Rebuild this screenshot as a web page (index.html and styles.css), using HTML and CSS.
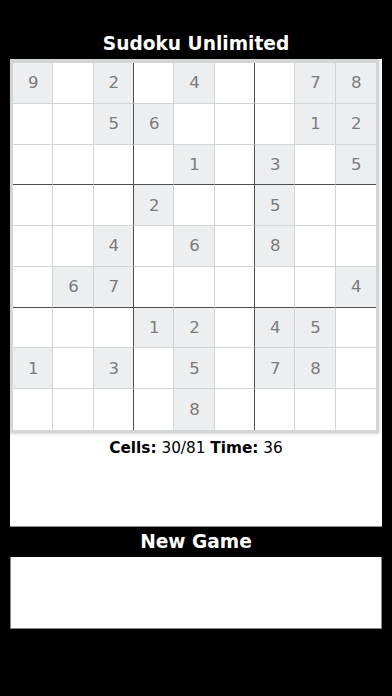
FILE: index.html
```html
<!DOCTYPE html>
<html>
<head>
<meta charset="utf-8">
<link rel="stylesheet" href="styles.css">
</head>
<body>
<div class="app">
  <h1 class="title">Sudoku Unlimited</h1>
  <div class="panel">
    <div class="board">
      <div class="c g">9</div><div class="c"></div><div class="c g br">2</div><div class="c"></div><div class="c g">4</div><div class="c br"></div><div class="c"></div><div class="c g">7</div><div class="c g last">8</div>
      <div class="c"></div><div class="c"></div><div class="c g br">5</div><div class="c g">6</div><div class="c"></div><div class="c br"></div><div class="c"></div><div class="c g">1</div><div class="c g last">2</div>
      <div class="c bb"></div><div class="c bb"></div><div class="c bb br"></div><div class="c bb"></div><div class="c g bb">1</div><div class="c bb br"></div><div class="c g bb">3</div><div class="c bb"></div><div class="c g bb last">5</div>
      <div class="c"></div><div class="c"></div><div class="c br"></div><div class="c g">2</div><div class="c"></div><div class="c br"></div><div class="c g">5</div><div class="c"></div><div class="c last"></div>
      <div class="c"></div><div class="c"></div><div class="c g br">4</div><div class="c"></div><div class="c g">6</div><div class="c br"></div><div class="c g">8</div><div class="c"></div><div class="c last"></div>
      <div class="c bb"></div><div class="c g bb">6</div><div class="c g bb br">7</div><div class="c bb"></div><div class="c bb"></div><div class="c bb br"></div><div class="c bb"></div><div class="c bb"></div><div class="c g bb last">4</div>
      <div class="c"></div><div class="c"></div><div class="c br"></div><div class="c g">1</div><div class="c g">2</div><div class="c br"></div><div class="c g">4</div><div class="c g">5</div><div class="c last"></div>
      <div class="c g">1</div><div class="c"></div><div class="c g br">3</div><div class="c"></div><div class="c g">5</div><div class="c br"></div><div class="c g">7</div><div class="c g">8</div><div class="c last"></div>
      <div class="c bot"></div><div class="c bot"></div><div class="c bot br"></div><div class="c bot"></div><div class="c g bot">8</div><div class="c bot br"></div><div class="c bot"></div><div class="c bot"></div><div class="c bot last"></div>
    </div>
    <p class="status"><b>Cells:</b> 30/81 <b>Time:</b> 36</p>
  </div>
  <h2 class="subtitle">New Game</h2>
  <div class="newgame"></div>
</div>
</body>
</html>
```
FILE: styles.css
```css
html, body {
  margin: 0;
  padding: 0;
  background: #000;
}
body {
  font-family: "DejaVu Sans", Verdana, sans-serif;
}
.app {
  width: 392px;
  height: 696px;
  display: flex;
  flex-direction: column;
}
.title {
  margin: 32px 0 3px;
  line-height: 24px;
  font-size: 18.6px;
  font-weight: bold;
  color: #fff;
  text-align: center;
}
.panel {
  margin: 0 10px;
  height: 467px;
  background: #fff;
  border-bottom: 1px solid #8a8a8a;
}
.board {
  box-sizing: border-box;
  width: 369px;
  height: 374px;
  border: 3px solid #d3d6d6;
  border-top-width: 4px;
  box-shadow: 0 1px 3px rgba(0,0,0,0.18);
  display: grid;
  grid-template-columns: repeat(9, 1fr);
  grid-template-rows: repeat(9, 1fr);
  background: #fff;
}
.c {
  box-sizing: border-box;
  border-right: 1px solid #d2d5d5;
  border-bottom: 1px solid #d2d5d5;
  display: flex;
  align-items: center;
  justify-content: center;
  padding-left: 1px;
  font-size: 16.5px;
  color: #7b7b7b;
  background: #fff;
}
.c.g {
  background: #eceeef;
}
.c.br {
  border-right: 1.5px solid #4e4e4e;
}
.c.bb {
  border-bottom: 1.5px solid #4e4e4e;
}
.c.last {
  border-right: none;
}
.c.bot {
  border-bottom: none;
}
.status {
  margin: 5px 0 0;
  line-height: 20px;
  font-size: 15.3px;
  color: #000;
  text-align: center;
}
.subtitle {
  margin: 0;
  padding-top: 1px;
  line-height: 28px;
  font-size: 18.6px;
  font-weight: bold;
  color: #fff;
  text-align: center;
}
.newgame {
  margin: 1px 10px 0;
  height: 71px;
  background: #fff;
  border: 1px solid #8a8a8a;
  border-top: none;
}
```
